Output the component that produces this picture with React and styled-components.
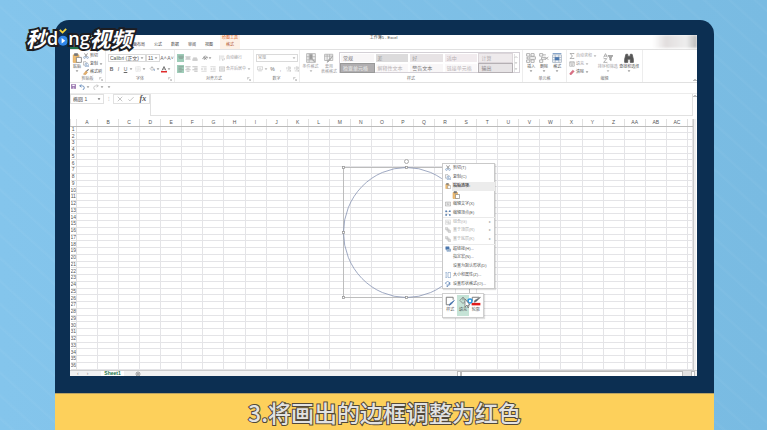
import React from 'react';
import styled, { createGlobalStyle, css } from 'styled-components';

const navy = '#0c2f52';
const line = '#e1e1e1';
const text = '#555';
const faded = '#a19d9f';
const green = '#9fcdb9';
const blue = '#4a76ad';

const Global = createGlobalStyle`
    * { box-sizing: border-box; }
    body {
        margin: 0;
        font-family: "Liberation Sans", "Noto Sans CJK SC", sans-serif;
        font-size: 4px;
        line-height: 6px;
        color: ${text};
    }
    button, select, input {
        font: inherit;
        color: inherit;
        margin: 0;
        padding: 0;
        border: 0;
        background: none;
        appearance: none;
        outline: none;
    }
    svg { display: block; flex: none; }
`;

const Page = styled.div`
    position: relative;
    display: flex;
    flex-direction: column;
    height: 100vh;
    padding: 20px 53px 0 55px;
    overflow: hidden;
    background:
        repeating-linear-gradient(42deg, transparent 0 7px, rgba(255,255,255,.03) 8px 9px, transparent 11px 17px),
        linear-gradient(90deg, #84c5ec, #79bbe2);
`;
const Frame = styled.div`
    flex: 1;
    min-height: 0;
    display: flex;
    padding: 15px 17px 17px 15px;
    background: ${navy};
    border-radius: 14px 14px 0 0;
`;
const Screen = styled.div`
    flex: 1;
    min-width: 0;
    display: flex;
    flex-direction: column;
    background: #fff;
    overflow: hidden;
`;
const Caption = styled.div`
    height: 37px;
    padding-top: 1px;
    background: #fdd05b;
    border-top: 1px solid #b9a263;
    text-align: center;
    font-family: "Noto Sans CJK SC", sans-serif;
    font-size: 23px;
    font-weight: 500;
    line-height: 35px;
    white-space: nowrap;
    color: #e2e2e2;
    -webkit-text-stroke: 2px #51483a;
    paint-order: stroke fill;
`;

const Logo = styled.div`
    position: absolute;
    left: 26px;
    top: 24px;
    display: flex;
    align-items: center;
    font-family: "Noto Sans CJK SC", sans-serif;
    font-size: 21px;
    font-weight: 700;
    font-style: italic;
    line-height: 28px;
    color: #fff;
    white-space: nowrap;
    -webkit-text-stroke: 4px #1d1d22;
    paint-order: stroke fill;
`;
const LogoLatin = styled.span`
    font-family: "Open Sans", sans-serif;
    font-size: 18px;
    font-weight: 600;
    font-style: normal;
`;

/* title and tabs */
const TitleBar = styled.header`
    display: grid;
    grid-template-columns: 1fr auto 1fr;
    height: 15px;
    border-bottom: 1px solid ${line};
`;
const Tabs = styled.nav`
    display: flex;
    align-items: flex-end;
    gap: 9px;
    white-space: nowrap;
`;
const FileTab = styled.a`
    width: 10px;
    height: 2px;
    margin-right: 40px;
    background: #21734c;
`;
const Tab = styled.a`
    color: #444;
    text-decoration: none;
    line-height: 9px;
`;
const ToolTab = styled(Tab)`
    display: flex;
    flex-direction: column;
    align-items: center;
    width: 20px;
    height: 14px;
    margin-left: -2px;
    background: #fdf1e6;
    line-height: 9px;
    color: #b4593a;
`;
const ToolTitle = styled.span`
    line-height: 5px;
    color: #e0662c;
`;
const DocTitle = styled.div`
    line-height: 5px;
    color: #444;
`;
const WindowButtons = styled.div`
    justify-self: end;
    width: 44px;
    height: 13px;
    background: linear-gradient(90deg, #fff0, #e2dede 30%, #eee 75%, #bbb);
    filter: blur(1px);
`;

/* ribbon */
const Ribbon = styled.div`
    position: relative;
    display: flex;
    height: 33px;
    border-bottom: 1px solid ${line};
    white-space: nowrap;
`;
const Group = styled.section`
    position: relative;
    display: flex;
    flex-direction: column;
    flex: none;
    width: ${p => p.w}px;
    padding: 2px 2px 1px;
    border-right: 1px solid #ededed;
`;
const GroupBody = styled.div`
    flex: 1;
    display: flex;
    gap: ${p => p.gap || 0}px;
`;
const GroupName = styled.div`
    text-align: center;
    line-height: 5px;
    color: #777;
`;
const Launcher = styled.button`
    position: absolute;
    right: 2px;
    bottom: 1px;
    width: 4px;
    height: 4px;
`;
const Stack = styled.div`
    display: flex;
    flex-direction: column;
    gap: ${p => p.gap || 0}px;
`;
const Row = styled.div`
    display: flex;
    align-items: center;
    gap: ${p => p.gap || 0}px;
    height: ${p => p.h || 8}px;
`;
const BigButton = styled.button`
    display: flex;
    flex-direction: column;
    align-items: center;
    width: ${p => p.w}px;
    padding-top: 1px;
    line-height: 5px;
    color: ${p => (p.$off ? faded : text)};
    svg { margin-bottom: 1px; }
`;
const SmallButton = styled.button`
    display: flex;
    align-items: center;
    gap: 1px;
    height: 8px;
    color: ${p => (p.$off ? faded : text)};
`;
const ToolButton = styled.button`
    display: grid;
    place-items: center;
    width: 7px;
    height: 8px;
    font-size: 5px;
    color: #666;
    background: ${p => (p.$on ? green : 'none')};
`;
const Combo = styled.label`
    display: flex;
    align-items: center;
    width: ${p => p.w}px;
    height: 8px;
    padding: 0 1px;
    border: 1px solid #dadada;
    color: ${p => (p.$off ? '#999' : text)};
    font-size: ${p => (p.$off ? 4 : 5)}px;
    select {
        flex: 1;
        min-width: 0;
        height: 6px;
        line-height: 6px;
    }
`;
const Gallery = styled.div`
    display: grid;
    grid-template-columns: repeat(5, 1fr) 4px;
    grid-template-rows: 8px 8px;
    gap: 2px;
    width: 181px;
    height: 21px;
    padding: 1px;
    border: 1px solid #d4d0d6;
`;
const tones = {
    plain: css`background: #f8f6f7; color: #777;`,
    mid: css`background: #dcdbdc; color: #999;`,
    soft: css`background: #e7e3e5; color: #999;`,
    pink: css`background: #f1ebee; color: #b8b0b4;`,
    boxed: css`background: #eeeaec; color: #b0aaae; outline: 1px solid #dcd6da;`,
    dark: css`background: #b0aeb0; color: #ddd; outline: 1px solid #999; font-weight: 700;`,
    pale: css`background: #faf8f9; color: #b8b2b5;`,
    out: css`background: #e7e4e6; color: #858085; outline: 1px solid #b5b0b4;`,
};
const Swatch = styled.button`
    padding-left: 2px;
    text-align: left;
    font-size: 5px;
    line-height: 8px;
    overflow: hidden;
    ${p => tones[p.$tone]}
`;
const GalleryScroll = styled.div`
    grid-column: 6;
    grid-row: 1 / 3;
    display: flex;
    flex-direction: column;
    justify-content: space-around;
    align-items: center;
    border-left: 1px solid ${line};
`;
const Collapse = styled.button`
    margin-left: auto;
    align-self: flex-end;
    width: 4px;
    height: 5px;
`;

const QuickBar = styled.div`
    display: flex;
    align-items: center;
    gap: 3px;
    height: 11px;
    padding: 0 1px 3px;
    border-bottom: 1px solid #ececec;
`;
const FormulaBar = styled.div`
    display: flex;
    align-items: flex-start;
    height: 22px;
    margin-bottom: 3px;
`;
const NameBox = styled.label`
    display: flex;
    align-items: center;
    width: 34px;
    height: 10px;
    padding: 0 2px;
    border: 1px solid ${line};
    input {
        flex: 1;
        min-width: 0;
        font-size: 5px;
    }
`;
const Dots = styled.span`
    width: 9px;
    text-align: center;
    font-size: 6px;
    line-height: 10px;
    color: #aaa;
`;
const FxBox = styled.div`
    display: flex;
    align-items: center;
    justify-content: space-around;
    width: 37px;
    height: 10px;
    border: 1px solid ${line};
`;
const Fx = styled.button`
    font-family: "Liberation Serif", serif;
    font-style: italic;
    font-weight: 700;
    font-size: 8px;
    line-height: 8px;
`;
const FormulaInput = styled.input`
    flex: 1;
    min-width: 0;
    height: 22px;
    border: 1px solid ${line};
    border-top: 0;
`;

/* sheet */
const SheetArea = styled.main`
    position: relative;
    flex: 1;
    min-height: 0;
    display: flex;
`;
const Sheet = styled.table`
    flex: 1;
    width: 100%;
    height: 100%;
    table-layout: fixed;
    border-collapse: collapse;
    font-size: 5px;
    line-height: 5px;
    th, td {
        padding: 0;
        border: 1px solid #e4e4e7;
        overflow: hidden;
    }
    th {
        border-color: #e0e0e0;
        font-weight: 400;
        color: #555;
    }
    thead th {
        height: 7px;
        border-top: 0;
        border-bottom-color: #bbb;
    }
    tbody th {
        border-left: 0;
    }
`;
const VScroll = styled.div`
    width: 4px;
    background: #f1f1f1;
    border-left: 1px solid #ccc;
    border-right: 1px solid #fff;
`;
const SheetBar = styled.footer`
    display: flex;
    align-items: stretch;
    height: 6px;
    background: #f1f1f1;
    border-top: 1px solid #ccc;
    line-height: 5px;
`;
const SheetNav = styled.div`
    display: flex;
    align-items: center;
    gap: 8px;
    width: 31px;
    padding-left: 7px;
    font-size: 5px;
    color: #888;
`;
const SheetTab = styled.button`
    width: 23px;
    background: #fff;
    color: #217346;
    font-weight: 700;
    font-size: 5px;
    line-height: 5px;
`;
const HScroll = styled.div`
    display: flex;
    justify-content: space-between;
    width: 38%;
    margin-left: auto;
    margin-right: 2px;
    background: #e2e2e2;
    button {
        width: 4px;
        background: #fff;
        border: 1px solid #bbb;
        border-bottom: 0;
    }
`;
const Thumb = styled.div`
    flex: 1;
    margin-right: 8px;
    background: #fff;
    border: 1px solid #bbb;
    border-bottom: 0;
`;

/* things floating over the cells */
const Shape = styled.svg`
    position: absolute;
    left: 270px;
    top: 39px;
`;
const Menu = styled.div`
    position: absolute;
    left: 372px;
    top: 44px;
    display: grid;
    grid-template-rows: repeat(14, 1fr);
    width: 53px;
    height: 126px;
    background: #fff;
    border: 1px solid #c9c9c9;
    box-shadow: 1px 1px 1px rgba(0,0,0,.12);
    white-space: nowrap;
`;
const MenuItem = styled.button`
    display: grid;
    grid-template-columns: 7px 1fr 6px;
    align-items: center;
    gap: 2px;
    min-height: 0;
    padding-left: 1px;
    text-align: left;
    line-height: 8px;
    color: ${p => (p.$off ? '#aaa' : text)};
    background: ${p => (p.$head ? 'linear-gradient(90deg, #fff 9px, #ececec 9px)' : 'none')};
    font-weight: ${p => (p.$head ? 700 : 400)};
    border-top: ${p => (p.$rule ? '1px solid #eaeaea' : '0')};
    svg { justify-self: center; }
`;
const PasteRow = styled.button`
    display: flex;
    align-items: center;
    min-height: 0;
    padding-left: 9px;
`;
const MiniBar = styled.div`
    position: absolute;
    left: 372px;
    top: 174px;
    display: flex;
    width: 42px;
    height: 25px;
    padding: 1px;
    background: #fff;
    border: 1px solid #cfcfcf;
    box-shadow: 1px 1px 1px rgba(0,0,0,.12);
`;
const MiniButton = styled.button`
    flex: 1;
    display: flex;
    flex-direction: column;
    align-items: center;
    justify-content: space-between;
    padding: 1px 0 3px;
    background: ${p => (p.$on ? '#c5e3d6' : 'none')};
`;
const Pointer = styled.svg`
    position: absolute;
    left: 394px;
    top: 178px;
`;

const Caret = ({ up, color = '#888' }) => (
    <svg width="4" height="4" viewBox="0 0 8 8">
        <path d={up ? 'M1 6 4 3 7 6' : 'M2 3h4L4 5.5z'} fill={up ? 'none' : color} stroke={color} strokeWidth={up ? 1.6 : 0.6} />
    </svg>
);

// all icons are drawn in a 16 unit box
const shapes = {
    cut: <><path d="M4 1l6 9M12 1L6 10" strokeWidth="2" /><circle cx="4" cy="12" r="2.4" stroke={blue} /><circle cx="12" cy="12" r="2.4" stroke={blue} /></>,
    copy: <><path d="M1 2h7l2 2v7H1z" fill="#fff" /><path d="M6 6h6l3 3v6H6zM8 9h3M8 12h5" fill="#fff" stroke={blue} /></>,
    brush: <><path d="M15 1L8 7" strokeWidth="3" /><path d="M8 5l4 4-5 6-6-1z" fill="#e4b06c" stroke="#c78f4a" /></>,
    paste: <><path d="M2 3h9v12H2z" fill="#f0bd72" stroke="#dda552" /><path d="M4 1h5v3H4z" fill="#777" /><path d="M7 7h8v8H7z" fill="#fff" /></>,
    border: <path d="M2 2h12v12H2zM8 2v12M2 8h12" strokeDasharray="1.5 1.5" />,
    bucket: <><path d="M3 7l5-5 5 5-5 5zM8 2v5" /><path d="M13 8q3 4 0 5" stroke={blue} strokeWidth="2" /></>,
    top: <path d="M1 3h14M1 6h14M3 9h10" />,
    middle: <path d="M1 5h14M3 8h10M1 11h14" />,
    bottom: <path d="M3 8h10M1 11h14M1 14h14" />,
    left: <path d="M1 2h14M1 6h9M1 10h14M1 14h9" />,
    center: <path d="M1 2h14M4 6h8M1 10h14M4 14h8" />,
    right: <path d="M1 2h14M6 6h9M1 10h14M6 14h9" />,
    orient: <path d="M2 9l7-7 2 2-7 7zM6 13L14 5M14 5v4M4 5l8 7" strokeWidth="1.8" />,
    outdent: <path d="M1 2h14M8 6h7M8 10h7M1 14h14M6 8H1M3 6L1 8l2 2" />,
    indent: <path d="M1 2h14M8 6h7M8 10h7M1 14h14M1 8h5M4 6l2 2-2 2" />,
    wrap: <path d="M2 1v14M4 3h10M4 8h8q3 0 3 2.5t-3 2.5H8M10 11l-2 2 2 2" />,
    merge: <path d="M1 2h14v12H1zM1 5h14M1 11h14M4 8h8M5 7L4 8l1 1M11 7l1 1-1 1" />,
    money: <path d="M1 2h14v8H1zM5 6h6M3 13h10" />,
    decimals: <path d="M2 3v6M6 2h3v7H6zM12 2v7M2 13h11M10 11l3 2-3 2" />,
    cond: <><path d="M1 1h14v14H1z" fill="#eee" /><path d="M5 1v14M1 6h14M1 11h14" /><path d="M6 2h4v8H6z" fill="#999" /><path d="M9 9l5 5" strokeWidth="2" /></>,
    format: <><path d="M1 2h13v10H1zM1 5h13M5 2v10M9 2v10" fill="#f2f2f2" /><path d="M14 5l-6 8-3 2 1-3z" fill="#aaa" /></>,
    insert: <path d="M1 1h5v4H1zM8 1h5v4H8zM1 11h5v4H1zM8 11h5v4H8zM6 6h9v4H6zM5 8H1M3 6L1 8l2 2" />,
    remove: <path d="M1 1h5v4H1zM6 3h5M1 11h5v4H1zM4 7h6v3H4zM10 6l5 5M15 6l-5 5" />,
    cells: <><path d="M1 3h14v12H1zM1 7h14M1 11h14M5 3v12M11 3v12" stroke="#9ab" /><path d="M5 7h6v4H5zM1 1h14" fill={blue} stroke={blue} /></>,
    sum: <path d="M13 3V1H3l6 7-6 7h10v-2" strokeWidth="1.6" />,
    fill: <path d="M2 2h12v12H2zM2 5h12M8 6v6M5 9l3 3 3-3" />,
    erase: <path d="M2 12l8-9 4 3-8 9H3z" fill="#dc7186" stroke="#c85b70" />,
    sort: <><path d="M1 7l3-6 3 6M2 5h4M1 9h5l-5 6h6" /><path d="M8 4h8l-3 4v4l-2-1V8z" fill="#aaa" /></>,
    find: <path d="M3 2h3v3h4V2h3l2 8v5h-5v-5H6v5H1v-5z" fill="#555" stroke="#555" />,
    save: <><path d="M1 1h14v14H1z" fill="#8b62a5" stroke="#8b62a5" /><path d="M4 2h8v5H4zM5 11h6v3H5z" fill="#fff" stroke="none" /></>,
    undo: <path d="M6 1L2 5l4 4M2 5h7q5 0 5 5t-4 5" strokeWidth="2" />,
    redo: <path d="M10 1l4 4-4 4M14 5H7q-5 0-5 5t4 5" strokeWidth="1.6" />,
    cross: <path d="M2 2l12 12M14 2L2 14" strokeWidth="1.8" />,
    check: <path d="M1 9l4 4L15 3" strokeWidth="1.8" />,
    launch: <path d="M2 10V2h8M6 6l8 8M14 8v6H8" strokeWidth="1.8" />,
    editText: <path d="M1 3h14v10H1zM4 6h5M4 9h8M11 5v2" />,
    points: <><path d="M3 3Q8 6 13 3M3 13Q8 8 13 13M3 3v10" strokeDasharray="3 1" /><path d="M1 1h4v4H1zM11 1h4v4h-4zM1 11h4v4H1zM11 11h4v4h-4z" fill={blue} stroke="none" /></>,
    group: <path d="M1 3h14v11H1zM4 6h5v4H4zM8 8h5v4H8z" />,
    layer: <path d="M1 1h6v6H1zM5 5h6v6H5zM9 9h6v6H9z" fill="#ddd" />,
    link: <><path d="M2 2h9v7H2z" fill={blue} stroke={blue} /><path d="M5 8h10v6H5z" fill="#b9cfe4" stroke={blue} /><path d="M8 11h4" /></>,
    size: <path d="M3 1v14M1 3l2-2 2 2M1 13l2 2 2-2M8 1h7v14H8z" />,
    shape: <path d="M1 5l6-4 7 4-4 3M1 5l3 4M14 8l-6 6-3 1 1-4 5-4z" strokeWidth="1.8" />,
    style: <><path d="M13 6V2H2v12h6" strokeWidth="1.5" /><path d="M15 7l-5 6-3 2 1-3z" fill={blue} stroke={blue} /></>,
    outline: <><path d="M2 8V2h11" strokeWidth="1.5" /><path d="M15 2L8 9l-3 1 1-3z" fill="#456" /><path d="M1 13h14" stroke="#e21a1a" strokeWidth="4" /></>,
};
const Icon = ({ name, size = 6, color = '#777' }) => (
    <svg width={size} height={size} viewBox="0 0 16 16" fill="none" stroke={color} strokeWidth="1.2">
        {shapes[name]}
    </svg>
);

const Tool = ({ icon, on, color, children, label }) => (
    <ToolButton $on={on} aria-label={label || icon}>
        {icon ? <Icon name={icon} color={color} /> : children}
    </ToolButton>
);

const RibbonGroup = ({ name, w, gap, launcher, children }) => (
    <Group w={w}>
        <GroupBody gap={gap}>{children}</GroupBody>
        <GroupName>{name}</GroupName>
        {launcher && <Launcher aria-label={name}><Icon name="launch" size={4} color="#999" /></Launcher>}
    </Group>
);

const swatches = [
    ['常规', 'plain'], ['差', 'mid'], ['好', 'soft'], ['适中', 'pink'], ['计算', 'boxed'],
    ['检查单元格', 'dark'], ['解释性文本', 'pale'], ['警告文本', 'plain'], ['链接单元格', 'pale'], ['输出', 'out'],
];

const menu = [
    { label: '剪切(T)', icon: 'cut' },
    { label: '复制(C)', icon: 'copy' },
    { label: '粘贴选项:', icon: 'paste', head: true },
    { paste: true },
    { label: '编辑文字(X)', icon: 'editText' },
    { label: '编辑顶点(E)', icon: 'points' },
    { label: '组合(G)', icon: 'group', off: true, sub: true, rule: true },
    { label: '置于顶层(R)', icon: 'layer', off: true, sub: true },
    { label: '置于底层(K)', icon: 'layer', off: true, sub: true },
    { label: '超链接(H)...', icon: 'link', rule: true },
    { label: '指定宏(N)...' },
    { label: '设置为默认形状(D)' },
    { label: '大小和属性(Z)...', icon: 'size', color: blue },
    { label: '设置形状格式(O)...', icon: 'shape', color: blue },
];

const columns = [...'ABCDEFGHIJKLMNOPQRSTUVWXYZ', 'AA', 'AB', 'AC'];
const rows = Array.from({ length: 36 }, (_, i) => i + 1);

const handles = [[3, 9], [66, 9], [3, 74], [3, 139], [66, 139], [129, 9], [129, 74], [129, 139]];

function RibbonBar() {
    return (
        <Ribbon>
            <RibbonGroup name="剪贴板" w={36} gap={1} launcher>
                <BigButton w={12}>
                    <Icon name="paste" size={10} />粘贴<Caret />
                </BigButton>
                <Stack>
                    <SmallButton><Icon name="cut" />剪切</SmallButton>
                    <SmallButton><Icon name="copy" />复制 <Caret /></SmallButton>
                    <SmallButton><Icon name="brush" />格式刷</SmallButton>
                </Stack>
            </RibbonGroup>
            <RibbonGroup name="字体" w={69} launcher>
                <Stack gap={1}>
                    <Row h={12}>
                        <Combo w={38}>
                            <select aria-label="字体"><option>Calibri (正文)</option></select><Caret />
                        </Combo>
                        <Combo w={14}>
                            <select aria-label="字号"><option>11</option></select><Caret />
                        </Combo>
                        <Tool label="增大字号">A˄</Tool>
                        <Tool label="减小字号">A˅</Tool>
                    </Row>
                    <Row>
                        <Tool label="加粗"><b>B</b></Tool>
                        <Tool label="倾斜"><i>I</i></Tool>
                        <Tool label="下划线"><u>U</u></Tool>
                        <Caret />
                        <Row gap={1}>
                            <span />
                            <Tool icon="border" color="#aaa" label="边框" /><Caret />
                            <span />
                            <Tool icon="bucket" label="填充颜色" /><Caret />
                        </Row>
                        <Tool label="字体颜色">
                            <svg width="6" height="7" viewBox="0 0 12 14">
                                <path d="M2 9l4-8 4 8M4 6h4" fill="none" stroke="#555" strokeWidth="1.5" />
                                <path d="M0 10h12v3H0z" fill="#e02b2b" />
                            </svg>
                        </Tool>
                        <Caret />
                    </Row>
                </Stack>
            </RibbonGroup>
            <RibbonGroup name="对齐方式" w={79} launcher>
                <Stack gap={1}>
                    <Row h={12}>
                        <Tool icon="top" on /><Tool icon="middle" /><Tool icon="bottom" />
                        <Row gap={3}><span /><Tool icon="orient" label="方向" /></Row>
                        <Caret />
                    </Row>
                    <Row>
                        <Tool icon="left" on /><Tool icon="center" /><Tool icon="right" />
                        <Row gap={2}><span /><Tool icon="outdent" color="#aaa" /><Tool icon="indent" color="#aaa" /></Row>
                    </Row>
                </Stack>
                <Stack gap={1}>
                    <Row h={12} gap={3}><span /><SmallButton $off><Icon name="wrap" color="#aaa" />自动换行</SmallButton></Row>
                    <Row gap={3}><span /><SmallButton $off><Icon name="merge" color="#aaa" />合并后居中 <Caret color="#aaa" /></SmallButton></Row>
                </Stack>
            </RibbonGroup>
            <RibbonGroup name="数字" w={46} launcher>
                <Stack gap={1}>
                    <Row h={12}>
                        <Combo w={42} $off>
                            <select aria-label="数字格式"><option>常规</option></select><Caret color="#aaa" />
                        </Combo>
                    </Row>
                    <Row gap={1}>
                        <Tool icon="money" color="#aaa" /><Caret color="#aaa" />
                        <Tool>%</Tool><Tool>,</Tool>
                        <Tool icon="decimals" color="#aaa" /><Tool icon="decimals" color="#aaa" />
                    </Row>
                </Stack>
            </RibbonGroup>
            <RibbonGroup name="样式" w={223}>
                <BigButton w={17} $off><Icon name="cond" size={10} color="#aaa" />条件格式<Caret color="#aaa" /></BigButton>
                <BigButton w={20} $off><Icon name="format" size={10} color="#aaa" />套用<span>表格格式</span></BigButton>
                <Gallery>
                    {swatches.map(([name, tone]) => <Swatch key={name} $tone={tone}>{name}</Swatch>)}
                    <GalleryScroll>
                        <Caret up color="#bbb" /><Caret color="#bbb" /><Caret color="#bbb" />
                    </GalleryScroll>
                </Gallery>
            </RibbonGroup>
            <RibbonGroup name="单元格" w={44}>
                <BigButton w={13}><Icon name="insert" size={10} color="#999" />插入<Caret /></BigButton>
                <BigButton w={14}><Icon name="remove" size={10} color="#999" />删除<Caret /></BigButton>
                <BigButton w={14}><Icon name="cells" size={10} />格式<Caret /></BigButton>
            </RibbonGroup>
            <RibbonGroup name="编辑" w={76}>
                <Stack>
                    <SmallButton $off><Icon name="sum" />自动求和 <Caret color="#aaa" /></SmallButton>
                    <SmallButton $off><Icon name="fill" />填充 <Caret color="#aaa" /></SmallButton>
                    <SmallButton><Icon name="erase" />清除 <Caret /></SmallButton>
                </Stack>
                <BigButton w={22} $off><Icon name="sort" size={10} color="#999" />排序和筛选<Caret color="#aaa" /></BigButton>
                <BigButton w={22}><Icon name="find" size={10} />查找和选择<Caret /></BigButton>
            </RibbonGroup>
            <Collapse aria-label="折叠功能区"><Caret up color="#555" /></Collapse>
        </Ribbon>
    );
}

function ContextMenu() {
    return (
        <Menu>
            {menu.map((item, i) => item.paste ? (
                <PasteRow key={i} aria-label="粘贴"><Icon name="paste" size={8} /></PasteRow>
            ) : (
                <MenuItem key={i} $off={item.off} $head={item.head} $rule={item.rule}>
                    {item.icon ? <Icon name={item.icon} color={item.off ? '#bbb' : item.color} /> : <span />}
                    <span>{item.label}</span>
                    {item.sub && <span>▸</span>}
                </MenuItem>
            ))}
        </Menu>
    );
}

export default function App() {
    return (
        <Page>
            <Global />
            <Frame>
                <Screen>
                    <TitleBar>
                        <Tabs>
                            <FileTab href="#" aria-label="文件" />
                            <Tab href="#">页面布局</Tab>
                            <Tab href="#">公式</Tab>
                            <Tab href="#">数据</Tab>
                            <Tab href="#">审阅</Tab>
                            <Tab href="#">视图</Tab>
                            <ToolTab href="#"><ToolTitle>绘图工具</ToolTitle>格式</ToolTab>
                        </Tabs>
                        <DocTitle>工作簿5 - Excel</DocTitle>
                        <WindowButtons />
                    </TitleBar>
                    <RibbonBar />
                    <QuickBar>
                        <Icon name="save" size={5} />
                        <SmallButton aria-label="撤消"><Icon name="undo" color={blue} /><Caret /></SmallButton>
                        <SmallButton aria-label="恢复"><Icon name="redo" color="#aaa" /><Caret /></SmallButton>
                        <Caret />
                    </QuickBar>
                    <FormulaBar>
                        <NameBox>
                            <input aria-label="名称框" defaultValue="椭圆 1" /><Caret color="#555" />
                        </NameBox>
                        <Dots>⁝</Dots>
                        <FxBox>
                            <Icon name="cross" color="#aaa" />
                            <Icon name="check" color="#aaa" />
                            <Fx>fx</Fx>
                        </FxBox>
                        <FormulaInput aria-label="编辑栏" />
                        <Caret up color="#555" />
                    </FormulaBar>
                    <SheetArea>
                        <Sheet>
                            <colgroup>
                                <col width="6" />
                                {columns.map(c => <col key={c} />)}
                                <col width="5" />
                            </colgroup>
                            <thead>
                                <tr><th />{columns.map(c => <th key={c}>{c}</th>)}<th /></tr>
                            </thead>
                            <tbody>
                                {rows.map(r => (
                                    <tr key={r}>
                                        <th>{r}</th>
                                        {columns.map(c => <td key={c} />)}
                                        <td />
                                    </tr>
                                ))}
                            </tbody>
                        </Sheet>
                        <VScroll />
                        <Shape width="134" height="143" viewBox="0 0 134 143" fill="none">
                            <path d="M3.5 9.5h126v130H3.5z" stroke="#bdbdbd" />
                            <ellipse cx="66.5" cy="74.5" rx="63" ry="65" stroke="#8793b3" strokeWidth=".8" />
                            <circle cx="66.5" cy="3.5" r="2" stroke="#aaa" fill="#fff" />
                            {handles.map(([x, y]) => (
                                <rect key={x + '-' + y} x={x - 0.5} y={y - 0.5} width="2" height="2" fill="#fff" stroke="#999" strokeWidth=".8" />
                            ))}
                        </Shape>
                        <ContextMenu />
                        <MiniBar>
                            <MiniButton><Icon name="style" size={10} color="#777" />样式</MiniButton>
                            <MiniButton $on><Icon name="bucket" size={10} />填充</MiniButton>
                            <MiniButton><Icon name="outline" size={10} />轮廓</MiniButton>
                        </MiniBar>
                        <Pointer width="10" height="12" viewBox="0 0 10 12">
                            <circle cx="6" cy="4" r="2" fill="none" stroke="#2b95dd" strokeWidth="1.5" />
                            <path d="M1 2v8l2-2 1 3 1-1-1-2h2z" fill="#fff" stroke="#666" strokeWidth=".7" />
                        </Pointer>
                    </SheetArea>
                    <SheetBar>
                        <SheetNav><span>‹</span><span>›</span></SheetNav>
                        <SheetTab>Sheet1</SheetTab>
                        <svg width="28" height="5" viewBox="0 0 28 5">
                            <circle cx="14" cy="3" r="2" fill="none" stroke="#777" strokeWidth=".7" />
                            <path d="M13 3h2M14 2v2" stroke="#777" strokeWidth=".7" />
                        </svg>
                        <HScroll>
                            <button aria-label="向左" />
                            <Thumb />
                            <button aria-label="向右" />
                        </HScroll>
                    </SheetBar>
                </Screen>
            </Frame>
            <Caption>3.将画出的边框调整为红色</Caption>
            <Logo>
                <span>秒</span>
                <LogoLatin>d</LogoLatin>
                <svg width="10" height="20" viewBox="0 0 11 22">
                    <path d="M2 2l3 3 4-4" fill="none" stroke="#f6d53b" strokeWidth="2" />
                    <circle cx="5.500" cy="14" r="5.500" fill="#2f86ea" />
                    <path d="M4 11v6l4-3z" fill="#fff" />
                </svg>
                <LogoLatin>ng</LogoLatin>
                <span>视频</span>
            </Logo>
        </Page>
    );
}
